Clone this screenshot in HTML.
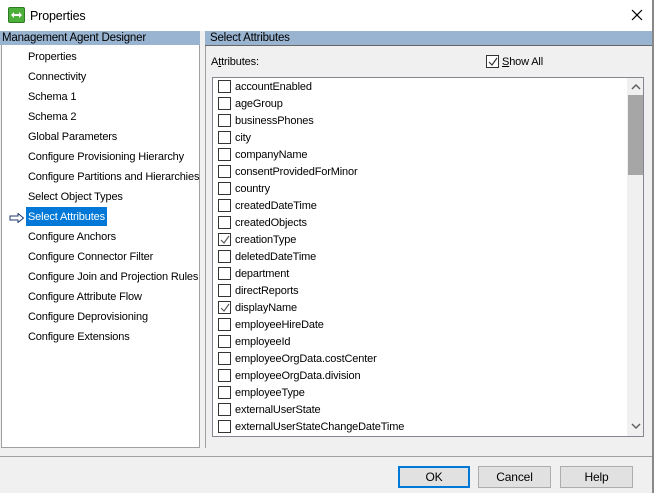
<!DOCTYPE html>
<html><head><style>
*{margin:0;padding:0;box-sizing:border-box}
body{width:654px;height:493px;background:#f0f0f0;font-family:"Liberation Sans",sans-serif;font-size:11px;letter-spacing:-0.15px;color:#000;position:relative;overflow:hidden}
.abs{position:absolute;white-space:nowrap}
.title{left:0;top:0;width:653px;height:31px;background:#fff}
.hdr{background:#99b4d1;height:14px;top:31px;font-size:11.5px;letter-spacing:-0.2px;line-height:15px;padding-left:2px;color:#000}
.left{left:1px;top:45px;width:199px;height:403px;background:#fff;border:1px solid #a0a0a0;border-top:none}
.li{position:absolute;left:24px;height:17px;line-height:17px;padding:0 2px;white-space:nowrap}
.list{left:212px;top:77px;width:432px;height:360px;background:#fff;border:1px solid #828790;overflow:hidden}
.row{position:absolute;left:5px;height:17px;line-height:19px}
.cb{position:absolute;left:0;top:2px;width:13px;height:13px;border:1px solid #333;background:#fff}
.row span{position:absolute;left:17px;white-space:nowrap}
.btn{top:466px;height:22px;background:#e1e1e1;border:1px solid #adadad;text-align:center;line-height:20px;font-size:12px}
</style></head><body>
<div class="abs title"></div>
<div class="abs" style="left:8px;top:7px;width:17px;height:16px;background:#4caf3a;border:1px solid #2d7a22;border-radius:2px"></div>
<svg class="abs" style="left:10px;top:9px" width="13" height="12"><path d="M1 6 L4 3 V5 H9 V3 L12 6 L9 9 V7 H4 V9 Z" fill="#fff"/></svg>
<div class="abs" style="left:30px;top:9px;font-size:12.5px">Properties</div>
<svg class="abs" style="left:631px;top:9px" width="12" height="12"><path d="M1 1L11 11M11 1L1 11" stroke="#000" stroke-width="1.2"/></svg>
<div class="abs" style="left:652px;top:0;width:2px;height:493px;background:#888"></div>
<div class="abs hdr" style="left:0;width:200px">Management Agent Designer</div>
<div class="abs hdr" style="left:205px;width:447px;padding-left:5px">Select Attributes</div>
<div class="abs" style="left:205px;top:45px;width:447px;height:1px;background:#666"></div>
<div class="abs left">
<div class="li" style="top:4px">Properties</div>
<div class="li" style="top:24px">Connectivity</div>
<div class="li" style="top:44px">Schema 1</div>
<div class="li" style="top:64px">Schema 2</div>
<div class="li" style="top:84px">Global Parameters</div>
<div class="li" style="top:104px">Configure Provisioning Hierarchy</div>
<div class="li" style="top:124px">Configure Partitions and Hierarchies</div>
<div class="li" style="top:144px">Select Object Types</div>
<div class="li" style="top:162px;height:19px;line-height:21px;background:#0078d7;color:#fff">Select Attributes</div>
<div class="li" style="top:184px">Configure Anchors</div>
<div class="li" style="top:204px">Configure Connector Filter</div>
<div class="li" style="top:224px">Configure Join and Projection Rules</div>
<div class="li" style="top:244px">Configure Attribute Flow</div>
<div class="li" style="top:264px">Configure Deprovisioning</div>
<div class="li" style="top:284px">Configure Extensions</div>
<svg style="position:absolute;left:7px;top:168px" width="16" height="10"><path d="M1 3H9V0.5L14.5 5L9 9.5V7H1Z" fill="#fff" stroke="#1f3a6e"/></svg>
</div>
<div class="abs" style="left:205px;top:46px;width:1px;height:402px;background:#a0a0a0"></div>
<div class="abs" style="left:211px;top:56px">A<u>t</u>tributes:</div>
<div class="abs" style="left:486px;top:55px;width:13px;height:13px;border:1px solid #333;background:#fff"></div>
<svg class="abs" style="left:488px;top:57px" width="10" height="10"><path d="M1 5L4 8L9 1" stroke="#333" fill="none" stroke-width="1.2"/></svg>
<div class="abs" style="left:502px;top:56px"><u>S</u>how All</div>
<div class="abs list">
<div class="row" style="top:0"><i class="cb"></i><span>accountEnabled</span></div>
<div class="row" style="top:17px"><i class="cb"></i><span>ageGroup</span></div>
<div class="row" style="top:34px"><i class="cb"></i><span>businessPhones</span></div>
<div class="row" style="top:51px"><i class="cb"></i><span>city</span></div>
<div class="row" style="top:68px"><i class="cb"></i><span>companyName</span></div>
<div class="row" style="top:85px"><i class="cb"></i><span>consentProvidedForMinor</span></div>
<div class="row" style="top:102px"><i class="cb"></i><span>country</span></div>
<div class="row" style="top:119px"><i class="cb"></i><span>createdDateTime</span></div>
<div class="row" style="top:136px"><i class="cb"></i><span>createdObjects</span></div>
<div class="row" style="top:153px"><i class="cb"></i><svg style="position:absolute;left:2px;top:4px" width="10" height="10"><path d="M1 5L4 8L9 1" stroke="#555" fill="none" stroke-width="1.1"/></svg><span>creationType</span></div>
<div class="row" style="top:170px"><i class="cb"></i><span>deletedDateTime</span></div>
<div class="row" style="top:187px"><i class="cb"></i><span>department</span></div>
<div class="row" style="top:204px"><i class="cb"></i><span>directReports</span></div>
<div class="row" style="top:221px"><i class="cb"></i><svg style="position:absolute;left:2px;top:4px" width="10" height="10"><path d="M1 5L4 8L9 1" stroke="#555" fill="none" stroke-width="1.1"/></svg><span>displayName</span></div>
<div class="row" style="top:238px"><i class="cb"></i><span>employeeHireDate</span></div>
<div class="row" style="top:255px"><i class="cb"></i><span>employeeId</span></div>
<div class="row" style="top:272px"><i class="cb"></i><span>employeeOrgData.costCenter</span></div>
<div class="row" style="top:289px"><i class="cb"></i><span>employeeOrgData.division</span></div>
<div class="row" style="top:306px"><i class="cb"></i><span>employeeType</span></div>
<div class="row" style="top:323px"><i class="cb"></i><span>externalUserState</span></div>
<div class="row" style="top:340px"><i class="cb"></i><span>externalUserStateChangeDateTime</span></div>
<div class="row" style="top:357px"><i class="cb"></i></div>
<div style="position:absolute;left:414px;top:0;width:17px;height:358px;background:#f0f0f0"></div>
<div style="position:absolute;left:415px;top:17px;width:15px;height:80px;background:#a6a6a6"></div>
<svg style="position:absolute;left:418px;top:5px" width="10" height="7"><path d="M1 6L5 2L9 6" stroke="#606060" fill="none" stroke-width="1.5"/></svg>
<svg style="position:absolute;left:418px;top:345px" width="10" height="7"><path d="M1 1L5 5L9 1" stroke="#606060" fill="none" stroke-width="1.5"/></svg>
</div>
<div class="abs" style="left:0;top:456px;width:652px;height:1px;background:#a0a0a0"></div>
<div class="abs btn" style="left:398px;width:72px;border:2px solid #0078d7;line-height:18px">OK</div>
<div class="abs btn" style="left:478px;width:73px">Cancel</div>
<div class="abs btn" style="left:560px;width:73px">Help</div>
</body></html>
